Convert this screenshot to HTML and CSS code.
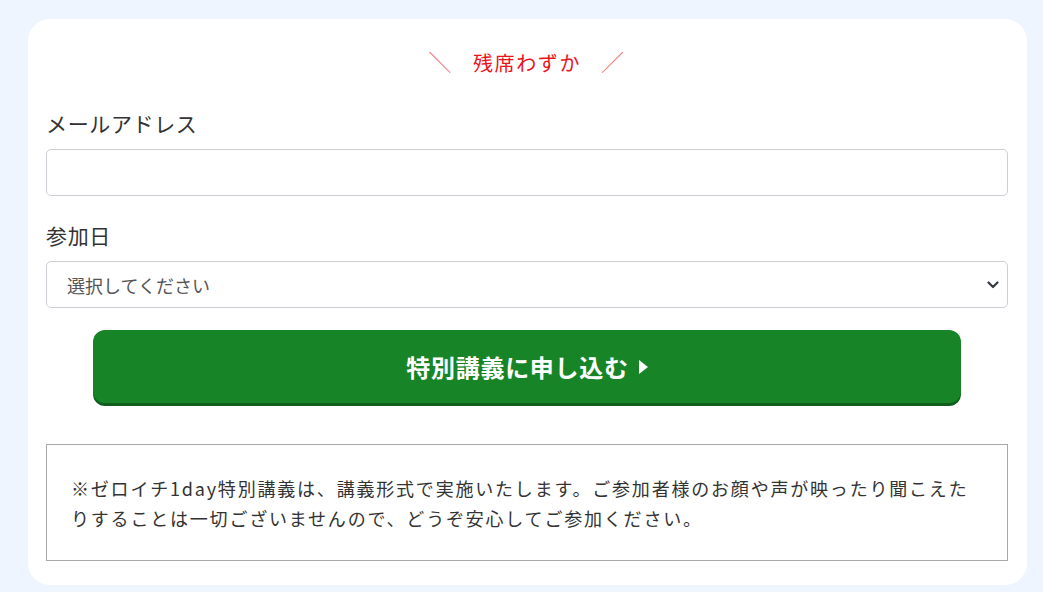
FILE: index.html
```html
<!DOCTYPE html>
<html lang="ja">
<head>
    <meta charset="UTF-8">
    <meta name="viewport" content="width=device-width, initial-scale=1.0">
    <title>特別講義 申し込み</title>
    <link rel="stylesheet" href="styles.css">
</head>
<body>
    <div class="card">
        <p class="lead"><span class="slash">＼</span>残席わずか<span class="slash">／</span></p>
        <form action="#" method="POST">
            <label for="email">メールアドレス</label>
            <input type="email" id="email" name="email">

            <label for="date">参加日</label>
            <select id="date" name="date">
                <option value="">選択してください</option>
            </select>

            <button type="submit">特別講義に申し込む<span class="arrow"></span></button>
        </form>
        <div class="notice">
            ※ゼロイチ1day特別講義は、講義形式で実施いたします。ご参加者様のお顔や声が映ったり聞こえたりすることは一切ございませんので、どうぞ安心してご参加ください。
        </div>
    </div>
</body>
</html>
```

FILE: styles.css
```css
/* page */
body {
    margin: 0;
    padding: 19px 16px 8px 28px;
    background-color: #eef5ff;
    font-family: "Noto Sans CJK JP", "Noto Sans", sans-serif;
    color: #333;
}
.card {
    background: #fff;
    border-radius: 22px;
    padding: 26px 19px 24px 18px;
}
.lead {
    margin: 0 0 29px;
    text-align: center;
    color: #e8141c;
    font-size: 20px;
    line-height: 32px;
    letter-spacing: 0.08em;
}
.slash {
    display: inline-block;
    margin: 0 20px;
    color: #f06a6a;
    font-size: 23px;
    font-weight: 300;
}
label {
    display: block;
    font-size: 21px;
    line-height: 30px;
    letter-spacing: 0.03em;
    margin-bottom: 11px;
}
input, select {
    display: block;
    box-sizing: border-box;
    width: 100%;
    height: 47px;
    margin: 0 0 24px;
    border: 1px solid #ccd0d5;
    border-radius: 5px;
    background: #fff;
    font-family: inherit;
}
select {
    height: 47px;
    margin-bottom: 22px;
    padding: 0 14px 0 20px;
    font-size: 18px;
    color: #555;
    appearance: none;
    background-image: url("data:image/svg+xml,%3Csvg xmlns='http://www.w3.org/2000/svg' width='12' height='8' viewBox='0 0 12 8'%3E%3Cpath d='M1.5 1.5 6 6l4.5-4.5' fill='none' stroke='%23343a40' stroke-width='2.2' stroke-linecap='round' stroke-linejoin='round'/%3E%3C/svg%3E");
    background-repeat: no-repeat;
    background-position: right 8px center;
    background-size: 12px 8px;
}
button {
    display: flex;
    align-items: center;
    justify-content: center;
    width: 868px;
    height: 73px;
    margin: 0 auto 41px;
    padding: 0;
    border: none;
    border-radius: 12px;
    background: #178527;
    box-shadow: 0 3px 0 #0f5e1b;
    color: #fff;
    font-family: inherit;
    font-size: 24px;
    font-weight: bold;
    letter-spacing: 0.03em;
    cursor: pointer;
}
.arrow {
    display: inline-block;
    margin-left: 10px;
    border-left: 9px solid #fff;
    border-top: 7px solid transparent;
    border-bottom: 7px solid transparent;
}
.notice {
    border: 1px solid #a8a8a8;
    padding: 28px 24px 27px 24px;
    font-size: 18px;
    line-height: 30px;
    letter-spacing: 0.1em;
}
```
